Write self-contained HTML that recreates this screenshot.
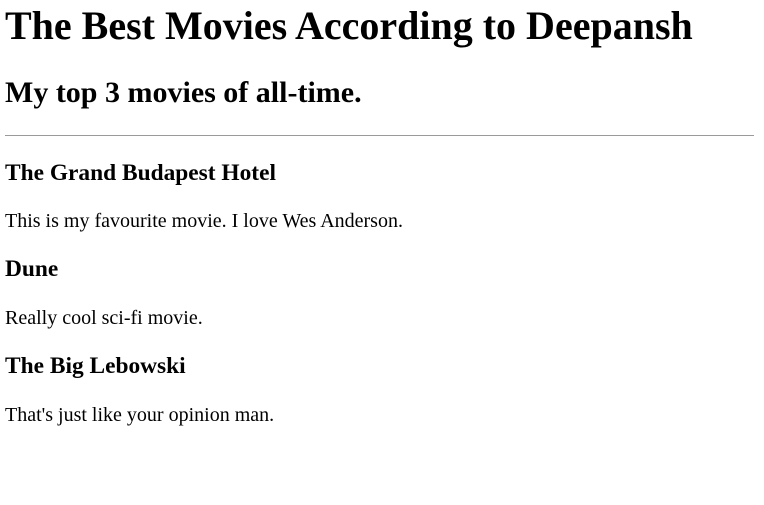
<!DOCTYPE html>
<html><head><meta charset="utf-8"><style>
body{margin:3px 10px 0 5px;font-family:"Liberation Serif",serif;font-size:20px;color:#000;background:#fff}
h1{font-size:40px;line-height:46px;margin:0 0 26.8px}
h2{font-size:30px;line-height:34.5px;margin:24.9px 0}
h3{font-size:23.4px;line-height:27px;margin:23.4px 0}
p{line-height:23px;margin:20px 0}
hr{border:0;border-top:1px solid #9a9a9a;margin:10px 0}
</style></head><body>
<h1>The Best Movies According to Deepansh</h1>
<h2>My top 3 movies of all-time.</h2>
<hr>
<h3>The Grand Budapest Hotel</h3>
<p>This is my favourite movie. I love Wes Anderson.</p>
<h3>Dune</h3>
<p>Really cool sci-fi movie.</p>
<h3>The Big Lebowski</h3>
<p>That's just like your opinion man.</p>
</body></html>
